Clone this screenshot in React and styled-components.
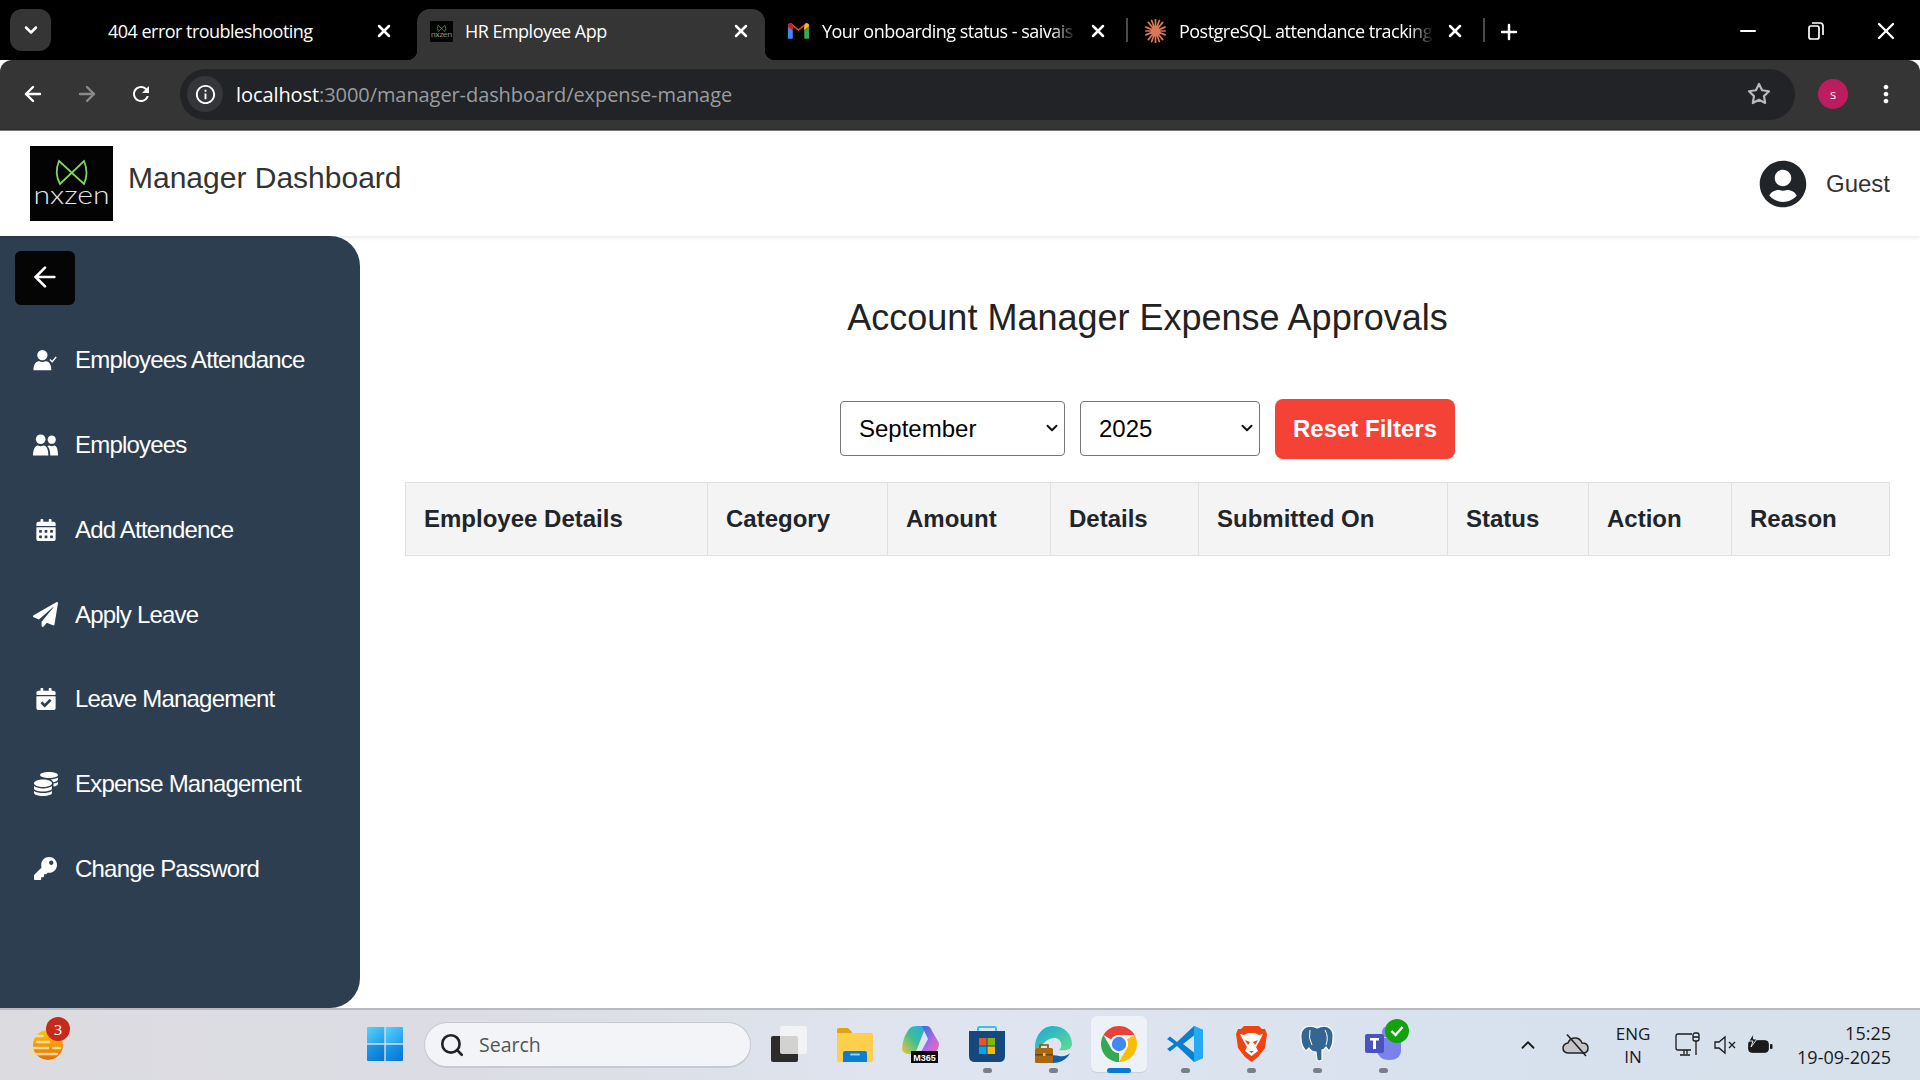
import React from "react";
import styled, { createGlobalStyle } from "styled-components";
import {
  FaUserCircle,
  FaCalendarAlt,
  FaPaperPlane,
  FaCalendarCheck,
  FaCoins,
  FaKey,
} from "react-icons/fa";
import { FiArrowLeft, FiArrowRight, FiSearch, FiChevronDown, FiChevronUp, FiX, FiMinus, FiPlus, FiStar } from "react-icons/fi";
import { MdRefresh, MdMoreVert, MdInfoOutline } from "react-icons/md";

const UI_FONT = `"Open Sans", "Noto Sans", sans-serif`;
const PAGE_FONT = `"Liberation Sans", Arial, sans-serif`;

const GlobalStyle = createGlobalStyle`
  html, body {
    margin: 0;
    padding: 0;
    background: #fff;
  }
  * {
    box-sizing: border-box;
  }
`;

const Screen = styled.div`
  display: flex;
  flex-direction: column;
  width: 1920px;
  height: 1080px;
  overflow: hidden;
  font-family: ${PAGE_FONT};
`;

/* browser chrome */
const TabStrip = styled.div`
  display: flex;
  align-items: flex-end;
  height: 60px;
  padding-left: 10px;
  background: #000;
  color: #fff;
  font-family: ${UI_FONT};
`;

const TabMenu = styled.div`
  display: flex;
  align-items: center;
  justify-content: center;
  width: 41px;
  height: 42px;
  margin: 0 9px 9px 0;
  border-radius: 12px;
  background: #353535;
  font-size: 20px;
`;

const Tab = styled.div`
  position: relative;
  display: flex;
  align-items: center;
  width: 348px;
  height: 51px;
  padding: 0 12px 7px 13px;
  border-radius: 13px 13px 0 0;
  background: ${(p) => (p.$active ? "#353535" : "transparent")};

  ${(p) =>
    p.$active &&
    `
    &::before, &::after {
      content: "";
      position: absolute;
      bottom: 0;
      width: 10px;
      height: 10px;
    }
    &::before {
      left: -10px;
      background: radial-gradient(circle at 0 0, transparent 10px, #353535 10.5px);
    }
    &::after {
      right: -10px;
      background: radial-gradient(circle at 100% 0, transparent 10px, #353535 10.5px);
    }
  `}
`;

const Favicon = styled.div`
  display: flex;
  align-items: center;
  justify-content: center;
  flex: none;
  width: 23px;
  height: 23px;
  margin-right: 12px;
`;

const TabTitle = styled.div`
  flex: ${(p) => (p.$fade ? "0 0 255px" : "1")};
  overflow: hidden;
  white-space: nowrap;
  font-size: 18px;
  letter-spacing: -0.52px;
  ${(p) => p.$fade && `mask-image: linear-gradient(to right, #000 90%, transparent 100%);`}
`;

const TabClose = styled.div`
  display: flex;
  flex: none;
  align-items: center;
  justify-content: center;
  width: 24px;
  margin-left: auto;
  font-size: 20px;
`;

const TabGap = styled.div`
  display: flex;
  align-items: center;
  justify-content: center;
  flex: none;
  width: 9px;
  height: 51px;
  padding-bottom: 9px;
`;

const TabLine = styled.div`
  width: 2px;
  height: 24px;
  background: #4a4a4a;
`;

const NewTab = styled.div`
  display: flex;
  align-items: center;
  margin: 0 0 16px 9px;
  font-size: 24px;
`;

const WindowControls = styled.div`
  display: flex;
  align-items: center;
  margin: 0 0 15px auto;
  padding-right: 20px;
  gap: 48px;
  font-size: 24px;
`;

const Toolbar = styled.div`
  display: flex;
  align-items: center;
  height: 71px;
  padding: 0 21px 2px 21px;
  border-radius: 12px 12px 0 0;
  background: #353535;
  border-bottom: 1px solid #7a7a7a;
  box-shadow: inset 0 -1px 0 #2b2b2b;
  color: #fff;
`;

const NavButton = styled.div`
  display: flex;
  align-items: center;
  justify-content: center;
  flex: none;
  width: 24px;
  margin-right: 30px;
  font-size: 26px;
  color: ${(p) => (p.$disabled ? "#8a8a8a" : "#fff")};
`;

const UrlPill = styled.div`
  display: flex;
  align-items: center;
  width: 1615px;
  height: 51px;
  margin-left: -3px;
  padding: 0 24px 0 7px;
  border-radius: 26px;
  background: #222326;
  font-family: ${UI_FONT};
`;

const InfoCircle = styled.div`
  display: flex;
  align-items: center;
  justify-content: center;
  flex: none;
  width: 36px;
  height: 36px;
  margin-right: 13px;
  border-radius: 50%;
  background: #35363a;
  font-size: 23px;
`;

const UrlText = styled.div`
  flex: 1;
  font-size: 20px;
  letter-spacing: -0.08px;
  color: #9a9ca0;
`;

const UrlHost = styled.span`
  color: #fff;
`;

const StarIcon = styled.div`
  display: flex;
  font-size: 24px;
  color: #b9b9b9;
`;

const Avatar = styled.div`
  display: flex;
  align-items: center;
  justify-content: center;
  flex: none;
  width: 30px;
  height: 30px;
  margin-left: 23px;
  border-radius: 50%;
  background: #bd1c5e;
  font-family: ${UI_FONT};
  font-size: 13px;
`;

const MoreButton = styled.div`
  display: flex;
  margin-left: 24px;
  margin-right: -7px;
  font-size: 28px;
`;

/* app header */
const Header = styled.header`
  position: relative;
  z-index: 2;
  display: flex;
  align-items: center;
  flex: none;
  height: 105px;
  padding: 0 30px;
  background: #fff;
  box-shadow: 0 2px 4px rgba(0, 0, 0, 0.08);
`;

const AppTitle = styled.h1`
  margin: 0 0 12px 15px;
  font-size: 30px;
  font-weight: 400;
  color: #333;
`;

const UserBox = styled.div`
  display: flex;
  align-items: center;
  margin-left: auto;
  gap: 19px;
  font-size: 24px;
  color: #333;
`;

const UserIcon = styled.div`
  display: flex;
  font-size: 48px;
  color: #212529;
`;

const Body = styled.div`
  display: flex;
  flex: 1;
  min-height: 0;
`;

const Sidebar = styled.aside`
  flex: none;
  width: 360px;
  padding: 15px 0 0;
  border-radius: 0 30px 30px 0;
  background: #2c3e50;
  color: #fff;
`;

const BackButton = styled.div`
  display: flex;
  align-items: center;
  justify-content: center;
  width: 60px;
  height: 54px;
  margin: 0 0 13px 15px;
  padding-bottom: 2px;
  border-radius: 6px;
  background: #050505;
  font-size: 32px;
`;

const NavItem = styled.div`
  display: flex;
  align-items: center;
  height: 84.75px;
  padding-left: 33px;
  font-size: 24px;
  letter-spacing: -0.8px;
`;

const NavIcon = styled.div`
  display: flex;
  align-items: center;
  justify-content: center;
  flex: none;
  width: 25px;
  margin-right: 17px;
  font-size: 24px;
`;

const Main = styled.main`
  flex: 1;
  padding: 60px 30px 0 45px;
  background: #fff;
`;

const PageTitle = styled.h2`
  margin: 0;
  font-size: 36px;
  line-height: 44px;
  font-weight: 400;
  text-align: center;
  color: #222;
`;

const Filters = styled.div`
  display: flex;
  align-items: center;
  justify-content: center;
  gap: 15px;
  margin: 59px 0 23px 0;
`;

const SelectWrap = styled.div`
  position: relative;
  display: flex;
  margin-bottom: 1px;
  width: ${(p) => p.$width}px;
`;

const Select = styled.select`
  width: 100%;
  height: 55px;
  padding: 0 0 0 18px;
  appearance: none;
  border: 1px solid #767676;
  border-radius: 4px;
  background: #fff;
  font-family: ${PAGE_FONT};
  font-size: 24px;
  color: #000;
`;

const SelectArrow = styled.div`
  position: absolute;
  top: 18px;
  right: 4px;
  display: flex;
  font-size: 18px;
  color: #111;
  pointer-events: none;
`;

const ResetButton = styled.button`
  width: 180px;
  height: 60px;
  border: none;
  border-radius: 8px;
  background: #f44336;
  color: #fff;
  font-family: ${PAGE_FONT};
  font-size: 24px;
  font-weight: 700;
`;

const Table = styled.table`
  width: 1484px;
  table-layout: fixed;
  border-collapse: collapse;
`;

const Th = styled.th`
  width: ${(p) => p.$width}px;
  height: 73px;
  padding: 0 18px;
  border: 1.5px solid #e0e0e0;
  background: #f4f4f4;
  font-size: 24px;
  font-weight: 700;
  text-align: left;
  color: #212529;
`;

/* taskbar */
const Taskbar = styled.footer`
  display: flex;
  align-items: center;
  flex: none;
  height: 72px;
  border-top: 2px solid #b8babf;
  background: linear-gradient(to right, #dbdbe0 0%, #dcdde4 25%, #dfe5f0 50%, #d8e2ee 75%, #d7e1ec 100%);
  font-family: ${UI_FONT};
  color: #1a1a1a;
`;

const WidgetSlot = styled.div`
  position: relative;
  flex: none;
  width: 30px;
  height: 30px;
  margin: 0 289px 0 33px;
`;

const WidgetBadge = styled.div`
  position: absolute;
  top: -13px;
  left: 13px;
  display: flex;
  align-items: center;
  justify-content: center;
  width: 24px;
  height: 24px;
  border-radius: 50%;
  background: #c42b1c;
  color: #fff;
  font-size: 15px;
`;

const TaskSlot = styled.div`
  position: relative;
  display: flex;
  align-items: center;
  justify-content: center;
  flex: none;
  width: 66px;
  height: 70px;
  padding-bottom: 2px;
  ${(p) =>
    p.$active &&
    `
    &::before {
      content: "";
      position: absolute;
      top: 6px;
      left: 5px;
      width: 56px;
      height: 56px;
      border-radius: 6px;
      background: #edf1f8;
      box-shadow: 0 1px 1px #c9ced8;
    }
    & > svg { position: relative; }
  `}
`;

const RunDot = styled.div`
  position: absolute;
  bottom: 7px;
  left: 50%;
  width: ${(p) => (p.$active ? 24 : 9)}px;
  height: 5px;
  margin-left: ${(p) => (p.$active ? -12 : -4.5)}px;
  border-radius: 3px;
  background: ${(p) => (p.$active ? "#0a78d4" : "#7b7e84")};
`;

const SearchBox = styled.div`
  display: flex;
  align-items: center;
  flex: none;
  width: 327px;
  height: 46px;
  margin: 0 5px 0 6px;
  padding-left: 14px;
  border: 1px solid #c6c9d2;
  border-bottom-width: 2px;
  border-radius: 23px;
  background: #f3f4f8;
  font-size: 19.5px;
  color: #555;
`;

const SearchIcon = styled.div`
  display: flex;
  margin-right: 14px;
  font-size: 26px;
  color: #222;
`;

const Tray = styled.div`
  display: flex;
  align-items: center;
  margin-left: auto;
  padding-right: 29px;
`;

const TrayItem = styled.div`
  display: flex;
  align-items: center;
  justify-content: center;
  flex: none;
  width: ${(p) => p.$width}px;
  margin-left: ${(p) => p.$gap || 0}px;
  font-size: ${(p) => p.$size || 22}px;
`;

const LangBox = styled.div`
  flex: none;
  width: 40px;
  margin-left: 23px;
  font-size: 17px;
  line-height: 23px;
  text-align: center;
`;

const Clock = styled.div`
  flex: none;
  margin-left: 24px;
  font-size: 18px;
  line-height: 24px;
  text-align: right;
`;

/* drawings */
const NxzenLogo = ({ width, height }) => (
  <svg width={width} height={height} viewBox="0 0 83 75">
    <rect width="83" height="75" fill="#030303" />
    <g fill="none" stroke="#7ed957" strokeWidth="1.8">
      <path d="M29 15 L54 38 Q59 27 54 15 L30 38 Q24 27 29 15 Z" />
    </g>
    <text x="41.5" y="58" textAnchor="middle" textLength="76" lengthAdjust="spacingAndGlyphs" fontFamily="Lato, sans-serif" fontWeight="300" fontSize="25" fill="#e8e8e8">
      nxzen
    </text>
  </svg>
);

const UserCheckIcon = () => (
  <svg width="28" height="24" viewBox="0 0 28 24" fill="currentColor">
    <circle cx="10.5" cy="6.5" r="5.8" />
    <path d="M0.5 23.5 C0.5 16 4 13.5 7 13.5 Q10.5 15 14 13.5 C17.5 13.5 20.5 16 20.5 23.5 Z" />
    <path d="M19 11.5 L21.5 14 L26 8.5" fill="none" stroke="currentColor" strokeWidth="1.6" />
  </svg>
);

const UsersIcon = () => (
  <svg width="26" height="22" viewBox="0 0 26 22" fill="currentColor">
    <circle cx="8" cy="5" r="5" />
    <circle cx="19.500" cy="5.500" r="4.300" />
    <path d="M0 22 C0 15 2.500 11.500 5 11.500 Q8 13 11 11.500 C14 11.500 16 15 16 22 Z" />
    <path d="M18 22 C18 17 17 14 15 12.500 Q16 11.500 17 11.500 Q19.500 13 22 11.500 C24.500 11.500 26 15 26 22 Z" />
  </svg>
);

const GmailIcon = () => (
  <svg width="23" height="18" viewBox="0 0 24 18">
    <path d="M1 4 V17 H6 V8 Z" fill="#4285f4" />
    <path d="M18 8 V17 H23 V4 Z" fill="#34a853" />
    <path d="M1 4 Q1 0 4.5 1 L12 7 L19.500 1 Q23 0 23 4 L18 8 V4 L12 9 L6 4 V8 Z" fill="#ea4335" />
    <path d="M18 8 V3.500 L19.500 1 Q23 0 23 4 Z" fill="#fbbc04" />
    <path d="M1 4 Q1 0 4.500 1 L6 3 V8 Z" fill="#c5221f" />
  </svg>
);

const ClaudeIcon = () => (
  <svg width="24" height="24" viewBox="0 0 24 24" stroke="#d97757" strokeWidth="1.8" strokeLinecap="round">
    <path d="M12 0 V24 M2 12 H22 M4.500 3 L19.500 21 M19.500 3 L4.500 21 M8 1 L16 23 M16 1 L8 23 M2 8 L22 16 M2 16 L22 8" />
  </svg>
);

const RestoreIcon = () => (
  <svg width="16" height="18" viewBox="0 0 16 18" fill="none" stroke="#fff" strokeWidth="1.7">
    <rect x="1" y="4" width="10" height="13" rx="2" />
    <path d="M4 1 H12 Q15 1 15 4 V13" />
  </svg>
);

const WidgetIcon = () => (
  <svg width="30" height="30" viewBox="0 0 30 30" style={{ overflow: "visible" }}>
    <defs>
      <linearGradient id="sun" x1="0" y1="0" x2="0" y2="1">
        <stop offset="0" stopColor="#fdc60c" />
        <stop offset="1" stopColor="#ec6a00" />
      </linearGradient>
    </defs>
    <circle cx="15" cy="15" r="15" fill="url(#sun)" />
    <g stroke="#f4dba0" strokeWidth="2.400" strokeLinecap="round">
      <path d="M3 6 H10 M4 12 H16 M20 18 H27 M-2 18 H15 M-2 24 H24" />
    </g>
  </svg>
);

const WindowsIcon = () => (
  <svg width="36" height="36" viewBox="0 0 36 36">
    <defs>
      <linearGradient id="winA" x1="0" y1="0" x2="1" y2="1">
        <stop offset="0" stopColor="#5bd0fd" />
        <stop offset="1" stopColor="#1b9de8" />
      </linearGradient>
      <linearGradient id="winB" x1="0" y1="0" x2="1" y2="1">
        <stop offset="0" stopColor="#1f9fea" />
        <stop offset="1" stopColor="#0673cf" />
      </linearGradient>
    </defs>
    <path d="M1 1 H17.300 V17.300 H0 V2 Q0 1 1 1Z" fill="url(#winA)" />
    <path d="M18.700 1 H35 Q36 1 36 2 V17.300 H18.700Z" fill="url(#winA)" />
    <path d="M0 18.700 H17.300 V35 H1 Q0 35 0 34Z" fill="url(#winB)" />
    <path d="M18.700 18.700 H36 V34 Q36 35 35 35 H18.700Z" fill="url(#winB)" />
  </svg>
);

const TaskViewIcon = () => (
  <svg width="36" height="36" viewBox="0 0 36 36">
    <rect x="0" y="10" width="27" height="26" rx="2" fill="#2d2c2b" />
    <rect x="9" y="0" width="27" height="28" rx="2" fill="#f6f6f7" fillOpacity="0.82" />
  </svg>
);

const FolderIcon = () => (
  <svg width="36" height="36" viewBox="0 0 36 36">
    <path d="M0 4 Q0 2 2 2 H11 L15 6 V12 H0Z" fill="#e0a50e" />
    <path d="M0 7 H34 Q36 7 36 9 V34 Q36 36 34 36 H2 Q0 36 0 34Z" fill="#fdcf4d" />
    <path d="M6 36 V27 Q6 25 8 25 H28 Q30 25 30 27 V36Z" fill="#0a7cd1" />
    <rect x="13" y="27.500" width="10" height="2" rx="1" fill="#8fd0f5" />
  </svg>
);

const CopilotIcon = () => (
  <svg width="38" height="38" viewBox="0 0 38 38">
    <defs>
      <linearGradient id="copA" x1="0" y1="1" x2="1" y2="0">
        <stop offset="0" stopColor="#f5c33b" />
        <stop offset="0.5" stopColor="#3fbf8f" />
        <stop offset="1" stopColor="#2aa4f4" />
      </linearGradient>
      <linearGradient id="copB" x1="0" y1="0" x2="1" y2="1">
        <stop offset="0" stopColor="#1f6fe0" />
        <stop offset="0.6" stopColor="#b868e8" />
        <stop offset="1" stopColor="#f06aa0" />
      </linearGradient>
    </defs>
    <path d="M8 3 Q10 1 15 1 H24 L15 24 Q13 29 8 29 Q0 29 0 23 Q1 11 8 3Z" fill="url(#copA)" />
    <path d="M20 1 H25 Q28 1 30 6 L37 18 Q37 27 31 27 H19 L26 14Z" fill="url(#copB)" />
    <rect x="9" y="26" width="27" height="12" fill="#0a0a0a" />
    <text x="22.500" y="35.500" textAnchor="middle" fontFamily="Liberation Sans, sans-serif" fontWeight="700" fontSize="9" fill="#fff">
      M365
    </text>
  </svg>
);

const StoreIcon = () => (
  <svg width="36" height="36" viewBox="0 0 36 36">
    <path d="M9 6 V2 Q9 1 10 1 H26 Q27 1 27 2 V6" fill="none" stroke="#35c1f1" strokeWidth="2" />
    <path d="M0 5 H36 V30 Q36 36 30 36 H6 Q0 36 0 30Z" fill="#14487f" />
    <rect x="10" y="12" width="7.500" height="7.500" fill="#f25022" />
    <rect x="18.500" y="12" width="7.500" height="7.500" fill="#7fba00" />
    <rect x="10" y="20.500" width="7.500" height="7.500" fill="#00a4ef" />
    <rect x="18.500" y="20.500" width="7.500" height="7.500" fill="#ffb900" />
  </svg>
);

const EdgeIcon = () => (
  <svg width="37" height="37" viewBox="0 0 37 37">
    <defs>
      <linearGradient id="edgeA" x1="0" y1="0" x2="1" y2="1">
        <stop offset="0" stopColor="#1aa5dd" />
        <stop offset="1" stopColor="#5fe08a" />
      </linearGradient>
    </defs>
    <path d="M18 0 C30 0 37 9 37 18 C37 24 30 25 24 24 C28 21 27 14 21 12 C14 11 7 17 4 24 L0 22 C0 9 8 0 18 0Z" fill="url(#edgeA)" />
    <path d="M10 37 C14 27 20 29 24 30 C29 31 33 29 35 27 C32 34 24 37 18 37Z" fill="#0f5fa8" />
    <rect x="0" y="22" width="18" height="15" rx="1.500" fill="#a9680f" />
    <path d="M5 22 V19 H13 V22" fill="none" stroke="#8a520a" strokeWidth="1.600" />
    <rect x="0" y="28" width="18" height="1.500" fill="#6e4208" />
    <rect x="8" y="27" width="2.500" height="3" fill="#f5c33b" />
  </svg>
);

const ChromeIcon = () => (
  <svg width="36" height="36" viewBox="4 4 40 40">
    <path d="M6.680 14 A20 20 0 0 1 41.320 14 H24 A10 10 0 0 0 15.340 19Z" fill="#ea4335" />
    <path d="M41.320 14 A20 20 0 0 1 24 44 L32.660 29 A10 10 0 0 0 32.660 19Z" fill="#fbbc04" />
    <path d="M24 44 A20 20 0 0 1 6.680 14 L15.340 29 A10 10 0 0 0 24 34Z" fill="#34a853" />
    <circle cx="24" cy="24" r="10" fill="#fff" />
    <circle cx="24" cy="24" r="8" fill="#4285f4" />
  </svg>
);

const VsCodeIcon = () => (
  <svg width="36" height="36" viewBox="0 0 36 36">
    <path d="M27 0 L36 4 V32 L27 36 L10 20 L3 25.500 L0 23 L7 18 L0 13 L3 10.500 L10 16Z M27 9.500 L16 18 L27 26.500Z" fill="#0a7fcc" fillRule="evenodd" />
    <path d="M27 0 L36 4 V32 L27 36Z" fill="#24a9f2" />
  </svg>
);

const BraveIcon = () => (
  <svg width="31" height="36" viewBox="0 0 31 36">
    <path d="M8 0 H23 L26 3 L29 3 L31 8 L29 22 L22 31 L15.500 36 L9 31 L2 22 L0 8 L2 3 L5 3Z" fill="#f1420f" />
    <path d="M8 9 L12 7 H19 L23 9 L27 8 L23 16 L20 21 L22 25 L15.500 30 L9 25 L11 21 L8 16 L4 8Z" fill="#fff" />
    <path d="M9 14 L14 16 L12 19Z M22 14 L17 16 L19 19Z M13 25 H18 L15.500 27Z" fill="#f1420f" />
  </svg>
);

const PostgresIcon = () => (
  <svg width="34" height="36" viewBox="0 0 34 36">
    <path d="M6 1 Q12 -1 17 2 Q23 -1 28 1 Q34 4 33 12 Q33 20 29 25 L26 21 Q24 24 22 24 V34 Q19 36 17 34 L16 26 Q11 26 9 22 L6 25 Q1 20 1 12 Q0 4 6 1Z" fill="#336791" stroke="#fff" strokeWidth="1.200" />
    <path d="M10 4 Q8 12 12 19 M25 4 Q29 11 26 19" fill="none" stroke="#fff" strokeWidth="1" />
  </svg>
);

const TeamsIcon = () => (
  <svg width="36" height="36" viewBox="0 0 36 36">
    <circle cx="23" cy="6" r="6" fill="#7b83eb" />
    <path d="M11 12 H34 Q36 12 36 14 V24 Q36 34 24 34 Q14 34 11 24Z" fill="#7b83eb" />
    <rect x="0" y="8" width="19" height="19" rx="2" fill="#4b53bc" />
    <path d="M5 12 H14 V14.500 H11 V23 H8 V14.500 H5Z" fill="#fff" />
  </svg>
);

const TeamsBadge = styled.div`
  position: absolute;
  top: 9px;
  right: 7px;
  display: flex;
  align-items: center;
  justify-content: center;
  width: 24px;
  height: 24px;
  border-radius: 50%;
  background: #13a10e;
`;

const CheckMark = () => (
  <svg width="14" height="12" viewBox="0 0 14 12" fill="none" stroke="#fff" strokeWidth="2.400">
    <path d="M1.500 6 L5.500 10 L12.500 2" />
  </svg>
);

const CloudOffIcon = () => (
  <svg width="28" height="24" viewBox="0 0 28 24">
    <path d="M7 20 Q1 20 1 15 Q1 11 6 10 Q8 5 13 5 Q18 5 20 10 Q26 10 26 15 Q26 20 21 20Z" fill="#c4c5c8" stroke="#222" strokeWidth="1.500" />
    <path d="M5 1.500 L24 23" stroke="#222" strokeWidth="1.600" />
  </svg>
);

const NetworkIcon = () => (
  <svg width="26" height="26" viewBox="0 0 26 26" fill="none" stroke="#1a1a1a" strokeWidth="1.300">
    <path d="M17 2 H3 Q1 2 1 4 V16 Q1 18 3 18 H16" />
    <path d="M9 18 V22 M5 23 H15 M12 18 V22" />
    <rect x="18" y="1" width="6" height="8" rx="2" />
    <path d="M21 9 V23 M18 5 H24" />
  </svg>
);

const MuteIcon = () => (
  <svg width="24" height="20" viewBox="0 0 24 20" fill="none" stroke="#1a1a1a" strokeWidth="1.300">
    <path d="M1 7 H5 L11 2 V18 L5 13 H1Z" />
    <path d="M15 7 L21 13 M21 7 L15 13" />
  </svg>
);

const BatteryIcon = () => (
  <svg width="26" height="22" viewBox="0 0 26 22">
    <rect x="1.700" y="6.700" width="19.600" height="11.600" rx="3" fill="#1a1a1a" stroke="#1a1a1a" />
    <rect x="23" y="10" width="2.500" height="5" rx="1" fill="#1a1a1a" />
    <path d="M6 0 L2 7 H6 L4 13 L10 5 H6.500Z" fill="#1a1a1a" stroke="#dbe4ee" strokeWidth="1" />
  </svg>
);

const NAV_ITEMS = [
  { label: "Employees Attendance", icon: <UserCheckIcon /> },
  { label: "Employees", icon: <UsersIcon /> },
  { label: "Add Attendence", icon: <FaCalendarAlt size={22} /> },
  { label: "Apply Leave", icon: <FaPaperPlane size={25} /> },
  { label: "Leave Management", icon: <FaCalendarCheck size={22} /> },
  { label: "Expense Management", icon: <FaCoins size={24} /> },
  { label: "Change Password", icon: <FaKey size={23} /> },
];

const COLUMNS = [
  { label: "Employee Details", width: 302 },
  { label: "Category", width: 180 },
  { label: "Amount", width: 163 },
  { label: "Details", width: 148 },
  { label: "Submitted On", width: 249 },
  { label: "Status", width: 141 },
  { label: "Action", width: 143 },
  { label: "Reason", width: 158 },
];

const TASK_APPS = [
  { id: "task", icon: <TaskViewIcon /> },
  { id: "folder", icon: <FolderIcon /> },
  { id: "copilot", icon: <CopilotIcon /> },
  { id: "store", icon: <StoreIcon />, running: true },
  { id: "edge", icon: <EdgeIcon />, running: true },
  { id: "chrome", icon: <ChromeIcon />, active: true },
  { id: "vscode", icon: <VsCodeIcon />, running: true },
  { id: "brave", icon: <BraveIcon />, running: true },
  { id: "postgres", icon: <PostgresIcon />, running: true },
  { id: "teams", icon: <TeamsIcon />, running: true, badge: true },
];

export default function App() {
  return (
    <Screen>
      <GlobalStyle />
      <TabStrip>
        <TabMenu>
          <FiChevronDown strokeWidth={3} />
        </TabMenu>
        <Tab>
          <Favicon />
          <TabTitle>404 error troubleshooting</TabTitle>
          <TabClose><FiX strokeWidth={3} /></TabClose>
        </Tab>
        <TabGap />
        <Tab $active>
          <Favicon><NxzenLogo width={23} height={23} /></Favicon>
          <TabTitle>HR Employee App</TabTitle>
          <TabClose><FiX strokeWidth={3} /></TabClose>
        </Tab>
        <TabGap />
        <Tab>
          <Favicon><GmailIcon /></Favicon>
          <TabTitle $fade>Your onboarding status - saivais</TabTitle>
          <TabClose><FiX strokeWidth={3} /></TabClose>
        </Tab>
        <TabGap><TabLine /></TabGap>
        <Tab>
          <Favicon><ClaudeIcon /></Favicon>
          <TabTitle $fade>PostgreSQL attendance tracking</TabTitle>
          <TabClose><FiX strokeWidth={3} /></TabClose>
        </Tab>
        <TabGap><TabLine /></TabGap>
        <NewTab><FiPlus strokeWidth={2.5} /></NewTab>
        <WindowControls>
          <FiMinus />
          <RestoreIcon />
          <FiX size={28} />
        </WindowControls>
      </TabStrip>

      <Toolbar>
        <NavButton><FiArrowLeft strokeWidth={2.4} /></NavButton>
        <NavButton $disabled><FiArrowRight strokeWidth={2.4} /></NavButton>
        <NavButton><MdRefresh size={30} /></NavButton>
        <UrlPill>
          <InfoCircle><MdInfoOutline /></InfoCircle>
          <UrlText>
            <UrlHost>localhost</UrlHost>:3000/manager-dashboard/expense-manage
          </UrlText>
          <StarIcon><FiStar strokeWidth={2.2} /></StarIcon>
        </UrlPill>
        <Avatar>s</Avatar>
        <MoreButton><MdMoreVert /></MoreButton>
      </Toolbar>

      <Header>
        <NxzenLogo width={83} height={75} />
        <AppTitle>Manager Dashboard</AppTitle>
        <UserBox>
          <UserIcon><FaUserCircle /></UserIcon>
          Guest
        </UserBox>
      </Header>

      <Body>
        <Sidebar>
          <BackButton><FiArrowLeft /></BackButton>
          {NAV_ITEMS.map((item) => (
            <NavItem key={item.label}>
              <NavIcon>{item.icon}</NavIcon>
              {item.label}
            </NavItem>
          ))}
        </Sidebar>
        <Main>
          <PageTitle>Account Manager Expense Approvals</PageTitle>
          <Filters>
            <SelectWrap $width={225}>
              <Select defaultValue="September">
                <option>September</option>
              </Select>
              <SelectArrow><FiChevronDown strokeWidth={2.6} /></SelectArrow>
            </SelectWrap>
            <SelectWrap $width={180}>
              <Select defaultValue="2025">
                <option>2025</option>
              </Select>
              <SelectArrow><FiChevronDown strokeWidth={2.6} /></SelectArrow>
            </SelectWrap>
            <ResetButton>Reset Filters</ResetButton>
          </Filters>
          <Table>
            <thead>
              <tr>
                {COLUMNS.map((col) => (
                  <Th key={col.label} $width={col.width}>{col.label}</Th>
                ))}
              </tr>
            </thead>
          </Table>
        </Main>
      </Body>

      <Taskbar>
        <WidgetSlot>
          <WidgetIcon />
          <WidgetBadge>3</WidgetBadge>
        </WidgetSlot>
        <TaskSlot><WindowsIcon /></TaskSlot>
        <SearchBox>
          <SearchIcon><FiSearch strokeWidth={2.4} /></SearchIcon>
          Search
        </SearchBox>
        {TASK_APPS.map((app) => (
          <TaskSlot key={app.id} $active={app.active}>
            {app.icon}
            {app.badge && <TeamsBadge><CheckMark /></TeamsBadge>}
            {(app.running || app.active) && <RunDot $active={app.active} />}
          </TaskSlot>
        ))}
        <Tray>
          <TrayItem $width={22} $size={26}><FiChevronUp /></TrayItem>
          <TrayItem $width={28} $gap={23}><CloudOffIcon /></TrayItem>
          <LangBox>ENG<br />IN</LangBox>
          <TrayItem $width={26} $gap={22}><NetworkIcon /></TrayItem>
          <TrayItem $width={24} $gap={13}><MuteIcon /></TrayItem>
          <TrayItem $width={26} $gap={9}><BatteryIcon /></TrayItem>
          <Clock>15:25<br />19-09-2025</Clock>
        </Tray>
      </Taskbar>
    </Screen>
  );
}
